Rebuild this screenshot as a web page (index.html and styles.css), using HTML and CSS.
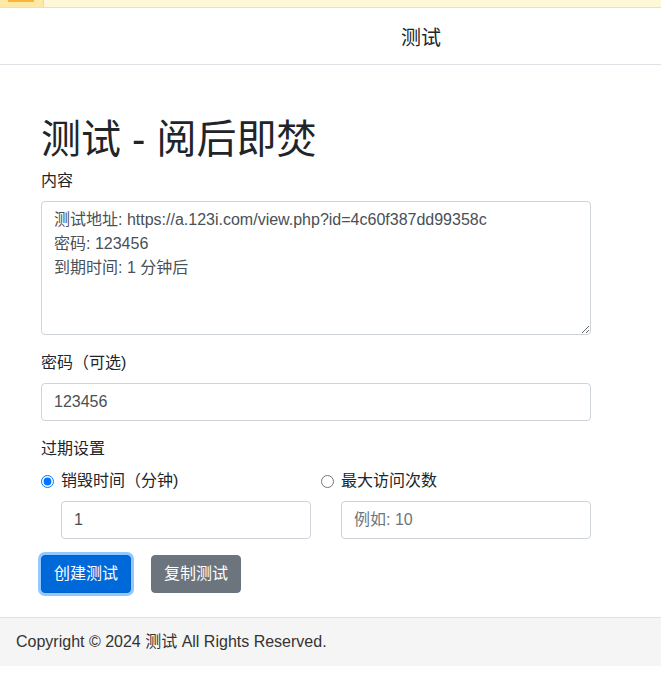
FILE: index.html
```html
<!DOCTYPE html>
<html lang="zh-CN">
<head>
<meta charset="utf-8">
<title>测试 - 阅后即焚</title>
<link rel="stylesheet" href="styles.css">
</head>
<body>
<div class="topstrip"><div class="tab"><span class="tab-mark"></span></div></div>
<nav class="navbar"><span class="brand">测试</span></nav>
<main class="main">
  <h1 class="title">测试 - 阅后即焚</h1>
  <div class="group">
    <label class="label">内容</label>
    <textarea class="control area" rows="5">测试地址: https://a.123i.com/view.php?id=4c60f387dd99358c
密码: 123456
到期时间: 1 分钟后</textarea>
  </div>
  <div class="group">
    <label class="label">密码（可选)</label>
    <input class="control" type="text" value="123456">
  </div>
  <div class="group">
    <label class="label">过期设置</label>
    <div class="cols">
      <div class="col">
        <label class="check"><input type="radio" name="exp" class="radio" checked><span>销毁时间（分钟)</span></label>
        <input class="control indent" type="text" value="1">
      </div>
      <div class="col">
        <label class="check"><input type="radio" name="exp" class="radio"><span>最大访问次数</span></label>
        <input class="control indent" type="text" placeholder="例如: 10">
      </div>
    </div>
  </div>
  <div class="buttons">
    <button class="btn btn-primary">创建测试</button>
    <button class="btn btn-secondary">复制测试</button>
  </div>
</main>
<footer class="footer">Copyright © 2024 测试 All Rights Reserved.</footer>
</body>
</html>
```
FILE: styles.css
```css
* { box-sizing: border-box; }
html, body { margin: 0; padding: 0; background: #fff; }
body {
  font-family: "Liberation Sans", "Noto Sans CJK SC", sans-serif;
  font-size: 16px;
  line-height: 1.5;
  color: #212529;
}
.topstrip {
  height: 8px;
  background: #fff8d8;
  border-bottom: 1px solid #f3e2a6;
  display: flex;
}
.tab {
  width: 44px;
  height: 7px;
  background: #fde9a5;
  border-right: 1px solid #f3dc8f;
  padding-left: 8px;
}
.tab-mark {
  display: block;
  width: 26px;
  height: 2px;
  background: #fbb53a;
}
.navbar {
  height: 57px;
  border-bottom: 1px solid #dee2e6;
  display: flex;
  align-items: center;
  justify-content: flex-end;
  padding: 4px 220px 0 0;
}
.brand {
  font-size: 20px;
  line-height: 30px;
  color: #212529;
}
.main {
  padding: 50px 0 0 41px;
  width: 591px;
}
.title {
  margin: 0 0 6px;
  font-size: 40px;
  font-weight: 400;
  line-height: 1.2;
}
.group { margin-bottom: 16px; }
.label {
  display: block;
  margin-bottom: 8px;
  font-size: 16px;
  line-height: 24px;
}
.control {
  display: block;
  width: 100%;
  height: 38px;
  padding: 6px 12px;
  font-family: inherit;
  font-size: 16px;
  line-height: 24px;
  color: #495057;
  background: #fff;
  border: 1px solid #ced4da;
  border-radius: 4px;
  outline: none;
}
.control::placeholder { color: #6c757d; }
.area {
  height: 134px;
  resize: vertical;
  overflow: hidden;
}
.cols {
  display: grid;
  grid-template-columns: 1fr 1fr;
  column-gap: 10px;
}
.check {
  display: flex;
  align-items: center;
  height: 24px;
  margin-bottom: 8px;
  font-size: 16px;
}
.radio {
  width: 13px;
  height: 13px;
  margin: 0 7px 0 0;
  accent-color: #0075ff;
}
.indent {
  margin-left: 20px;
  width: calc(100% - 20px);
}
.buttons {
  display: flex;
  gap: 20px;
  margin-bottom: 24px;
}
.btn {
  height: 38px;
  padding: 6px 12px;
  font-family: inherit;
  font-size: 16px;
  line-height: 24px;
  color: #fff;
  border-radius: 4px;
  border: 1px solid transparent;
}
.btn-primary {
  background: #0069d9;
  border-color: #0062cc;
  box-shadow: 0 0 0 3px rgba(38, 143, 255, 0.5);
}
.btn-secondary {
  background: #6c757d;
  border-color: #6c757d;
}
.footer {
  border-top: 1px solid #dee2e6;
  background: #f5f5f5;
  padding: 12px 16px;
  line-height: 24px;
  font-size: 16px;
  color: #333;
}
```
